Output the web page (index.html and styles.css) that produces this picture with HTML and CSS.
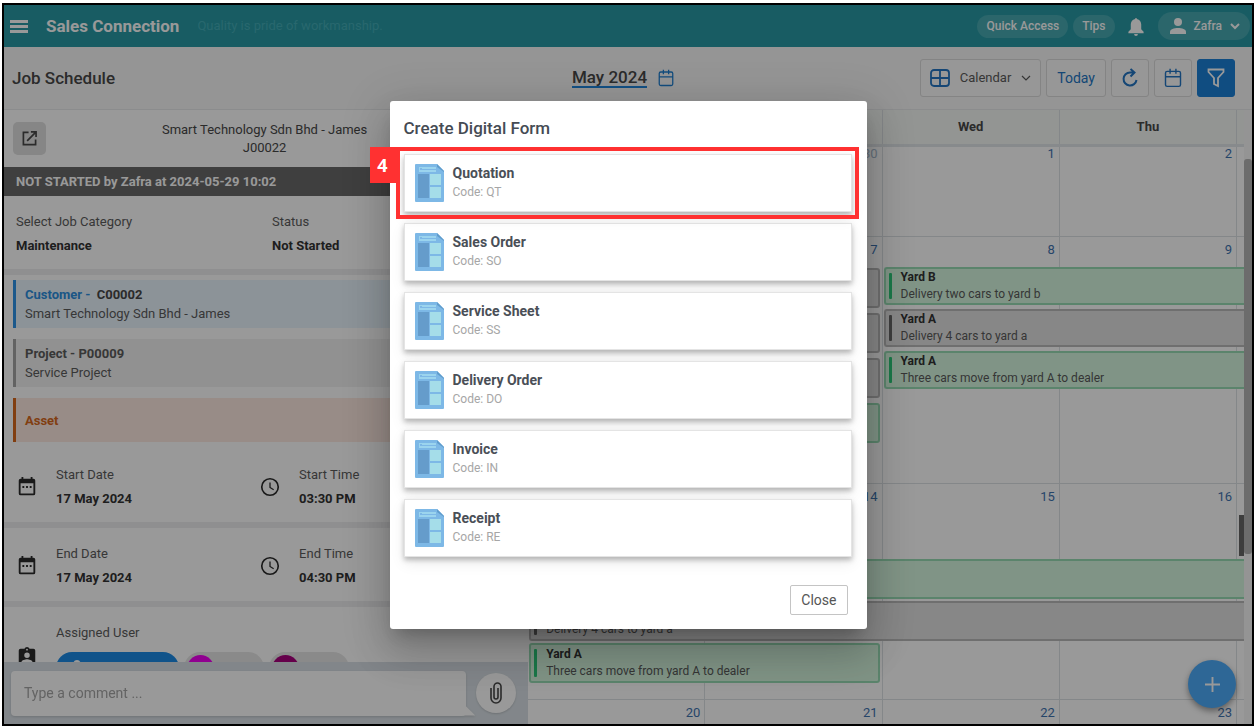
FILE: index.html
```html
<!DOCTYPE html>
<html lang="en">
<head>
<meta charset="utf-8">
<meta name="viewport" content="width=device-width, initial-scale=1">
<title>Sales Connection - Job Schedule</title>
<link rel="stylesheet" href="styles.css">
</head>
<body>
<svg class="sprite" aria-hidden="true">
  <symbol id="i-date" viewBox="0 0 24 24"><path fill="currentColor" d="M7 11h2v2H7zm4 0h2v2h-2zm4 0h2v2h-2zm4-8h-1V1h-2v2H8V1H6v2H5a2 2 0 0 0-2 2v14a2 2 0 0 0 2 2h14a2 2 0 0 0 2-2V5a2 2 0 0 0-2-2zm0 16H5V8h14z"/></symbol>
  <symbol id="i-clock" viewBox="0 0 24 24"><circle cx="12" cy="12" r="9" fill="none" stroke="currentColor" stroke-width="1.800"/><path d="M12 7v5.500l4 2.500" fill="none" stroke="currentColor" stroke-width="1.400"/></symbol>
  <symbol id="i-cal" viewBox="0 0 24 24"><path d="M5 4h14a2 2 0 0 1 2 2v14a2 2 0 0 1-2 2H5a2 2 0 0 1-2-2V6a2 2 0 0 1 2-2zM3 10.500h18M8.500 1v6M15.500 1v6" fill="none" stroke="currentColor" stroke-width="1.700"/></symbol>
  <symbol id="i-doc" viewBox="0 0 29 38"><path fill="#7db8e6" d="M1 0h21l7 7v30a1 1 0 0 1-1 1H1a1 1 0 0 1-1-1V1a1 1 0 0 1 1-1z"/><path fill="#5f9ccc" d="M22 0l7 7v1l-7-5z"/><path fill="#9bd4ee" d="M4 3h17v5H4z"/><path fill="#7db8e6" d="M6 4h1v1h14v1H5V4z"/><path fill="#659ccb" d="M3 10h11v24H3z"/><path fill="#a5dde9" d="M15 10h11v11H15zM15 23h11v11H15z"/></symbol>
</svg>

<div class="app">
  <header class="topbar">
    <button class="menu-btn" type="button" aria-label="Menu"><span></span><span></span><span></span></button>
    <strong class="brand">Sales Connection</strong>
    <span class="motto">Quality is pride of workmanship.</span>
    <button class="pill" type="button">Quick Access</button>
    <button class="pill" type="button">Tips</button>
    <button class="bell" type="button" aria-label="Notifications"><svg viewBox="0 0 16 20"><path fill="currentColor" d="M7 2a1 1 0 0 1 2 0c3 .6 4.500 3 4.500 6v5L16 15.500V17H0v-1.500L2.500 13V8C2.500 5 4 2.600 7 2zM6 18h4a2 2 0 0 1-4 0z"/></svg></button>
    <button class="pill pill--user" type="button">
      <svg class="user-icon" viewBox="0 0 16 16"><circle cx="8" cy="4" r="4" fill="currentColor"/><path fill="currentColor" d="M0 16v-2c0-3 4-4 8-4s8 1 8 4v2z"/></svg>
      Zafra
      <svg class="chev" viewBox="0 0 10 10"><path d="M1 3l4 4 4-4" fill="none" stroke="currentColor" stroke-width="2"/></svg>
    </button>
  </header>

  <div class="toolbar">
    <h1 class="page-title">Job Schedule</h1>
    <div class="month"><a href="#" class="month-link">May 2024</a><svg class="month-icon"><use href="#i-cal"/></svg></div>
    <div class="tools">
      <button class="tool tool--view" type="button">
        <svg class="grid-icon" viewBox="0 0 20 18"><rect x="1" y="1" width="18" height="16" rx="3" fill="none" stroke="currentColor" stroke-width="1.800"/><path d="M10 1v16M1 9h18" stroke="currentColor" stroke-width="1.800"/></svg>
        Calendar
        <svg class="chev" viewBox="0 0 10 10"><path d="M1 3l4 4 4-4" fill="none" stroke="currentColor" stroke-width="1.200"/></svg>
      </button>
      <button class="tool tool--today" type="button">Today</button>
      <button class="tool" type="button" aria-label="Refresh"><svg viewBox="0 0 18 20" class="tool-icon"><path d="M15.500 12a6.500 6.500 0 1 1-6.500-7.500h4M9.500 1l4 3.500-4 4" fill="none" stroke="currentColor" stroke-width="2"/></svg></button>
      <button class="tool" type="button" aria-label="Pick date"><svg class="tool-icon"><use href="#i-cal"/></svg></button>
      <button class="tool tool--filter" type="button" aria-label="Filter"><svg viewBox="0 0 18 20" class="tool-icon"><path d="M1.500 1.500h15v2.500L11 10v8l-4-2v-6L1.500 4z" fill="none" stroke="currentColor" stroke-width="1.800"/></svg></button>
    </div>
  </div>

  <main class="main">
    <section class="job">
      <div class="job-scroll">
        <div class="job-head">
          <button class="open-btn" type="button" aria-label="Open job"><svg viewBox="0 0 16 16"><path d="M7 1.500H1.500v13h13V9M9.500 1h5.500v5.500M15 1L5.500 10.500" fill="none" stroke="currentColor" stroke-width="1.800"/></svg></button>
          <p class="job-name">Smart Technology Sdn Bhd - James<br>J00022</p>
        </div>
        <p class="job-status">NOT STARTED by Zafra at 2024-05-29 10:02</p>
        <dl class="row">
          <div><dt>Select Job Category</dt><dd>Maintenance</dd></div>
          <div><dt>Status</dt><dd>Not Started</dd></div>
        </dl>
        <div class="links">
          <div class="link link--customer"><b><span class="link-kind">Customer - </span> C00002</b><span>Smart Technology Sdn Bhd - James</span></div>
          <div class="link link--project"><b>Project - P00009</b><span>Service Project</span></div>
          <div class="link link--asset"><b>Asset</b></div>
        </div>
        <dl class="row row--icons">
          <div class="cell"><svg class="cell-icon"><use href="#i-date"/></svg><div><dt>Start Date</dt><dd>17 May 2024</dd></div></div>
          <div class="cell"><svg class="cell-icon"><use href="#i-clock"/></svg><div><dt>Start Time</dt><dd>03:30 PM</dd></div></div>
        </dl>
        <dl class="row row--icons">
          <div class="cell"><svg class="cell-icon"><use href="#i-date"/></svg><div><dt>End Date</dt><dd>17 May 2024</dd></div></div>
          <div class="cell"><svg class="cell-icon"><use href="#i-clock"/></svg><div><dt>End Time</dt><dd>04:30 PM</dd></div></div>
        </dl>
        <div class="row row--users">
          <div class="cell">
            <svg class="cell-icon" viewBox="0 0 24 24"><path fill="currentColor" d="M19 3h-4.200a3 3 0 0 0-5.600 0H5a2 2 0 0 0-2 2v14a2 2 0 0 0 2 2h14a2 2 0 0 0 2-2V5a2 2 0 0 0-2-2zm-7 0a1 1 0 1 1 0 2 1 1 0 0 1 0-2zm0 4a3 3 0 1 1 0 6 3 3 0 0 1 0-6zm6 12H6v-1.400c0-2 4-3.100 6-3.100s6 1.100 6 3.100z"/></svg>
            <div>
              <div>Assigned User</div>
              <div class="chips">
                <span class="chip chip--main"><svg viewBox="0 0 16 16"><circle cx="8" cy="4" r="4" fill="currentColor"/><path fill="currentColor" d="M0 16v-2c0-3 4-4 8-4s8 1 8 4v2z"/></svg></span>
                <span class="chip"><i class="avatar avatar--pink"></i></span>
                <span class="chip"><i class="avatar avatar--wine"></i></span>
              </div>
            </div>
          </div>
        </div>
      </div>
      <form class="comment">
        <div class="bubble"><input class="comment-input" type="text" placeholder="Type a comment ..." aria-label="Comment"></div>
        <button class="clip" type="button" aria-label="Attach file"><svg viewBox="0 0 12 22"><path d="M1 6v10a5 5 0 0 0 10 0V4.500a3.500 3.500 0 0 0-7 0V15a2 2 0 0 0 4 0V6" fill="none" stroke="currentColor" stroke-width="1.600"/></svg></button>
      </form>
    </section>

    <section class="calendar">
      <div class="cols heads"><div></div><div></div><div>Wed</div><div>Thu</div><div></div></div>
      <div class="cols week week--1">
        <div class="day"></div><div class="day day--other">30</div><div class="day">1</div><div class="day">2</div><div class="day"></div>
      </div>
      <div class="cols week week--2">
        <div class="day"></div><div class="day">7</div><div class="day">8</div><div class="day">9</div><div class="day"></div>
        <div class="stack stack--tue">
          <div class="event event--tall"></div><div class="event event--tall"></div><div class="event event--tall"></div><div class="event event--tall event--green"></div>
        </div>
        <div class="stack stack--wed">
          <div class="event event--green event--open"><b>Yard B</b><span>Delivery two cars to yard b</span></div>
          <div class="event event--open"><b>Yard A</b><span>Delivery 4 cars to yard a</span></div>
          <div class="event event--green event--open"><b>Yard A</b><span>Three cars move from yard A to dealer</span></div>
        </div>
      </div>
      <div class="cols week week--3">
        <div class="day"></div><div class="day">14</div><div class="day">15</div><div class="day">16</div><div class="day"><i class="stub"></i></div>
        <div class="stack stack--full">
          <div class="event event--tall event--green event--open"></div>
          <div class="event event--tall event--open"><b>Yard A</b><span>Delivery 4 cars to yard a</span></div>
        </div>
        <div class="stack stack--half">
          <div class="event event--tall event--green"><b>Yard A</b><span>Three cars move from yard A to dealer</span></div>
        </div>
      </div>
      <div class="cols week week--4">
        <div class="day">20</div><div class="day">21</div><div class="day">22</div><div class="day">23</div><div class="day"></div>
      </div>
    </section>
    <div class="scrollbar"><div class="thumb"></div></div>
  </main>

  <button class="fab" type="button" aria-label="Add"><svg viewBox="0 0 16 16"><path d="M8 0v16M0 8h16" stroke="currentColor" stroke-width="2"/></svg></button>

  <div class="backdrop">
    <div class="modal" role="dialog" aria-labelledby="modal-title">
      <h2 class="modal-title" id="modal-title">Create Digital Form</h2>
      <div class="forms">
        <div class="form-slot">
          <button class="form-card" type="button"><svg class="doc"><use href="#i-doc"/></svg><span><b>Quotation</b><small>Code: QT</small></span></button>
          <div class="callout"><span class="callout-num">4</span></div>
        </div>
        <button class="form-card" type="button"><svg class="doc"><use href="#i-doc"/></svg><span><b>Sales Order</b><small>Code: SO</small></span></button>
        <button class="form-card" type="button"><svg class="doc"><use href="#i-doc"/></svg><span><b>Service Sheet</b><small>Code: SS</small></span></button>
        <button class="form-card" type="button"><svg class="doc"><use href="#i-doc"/></svg><span><b>Delivery Order</b><small>Code: DO</small></span></button>
        <button class="form-card" type="button"><svg class="doc"><use href="#i-doc"/></svg><span><b>Invoice</b><small>Code: IN</small></span></button>
        <button class="form-card" type="button"><svg class="doc"><use href="#i-doc"/></svg><span><b>Receipt</b><small>Code: RE</small></span></button>
      </div>
      <button class="close-btn" type="button">Close</button>
    </div>
  </div>
</div>
</body>
</html>
```
FILE: styles.css
```css
* { box-sizing: border-box; margin: 0; padding: 0; }
body {
  height: 100vh;
  padding: 3px 3px 2px 2px;
  background: #fff;
  font: 13px/18px Roboto, "Liberation Sans", sans-serif;
  color: #484848;
}
button, input { font: inherit; color: inherit; border: 0; background: none; }
button { cursor: pointer; }
svg { display: block; flex: none; }
b, strong, dd { font-weight: 700; }
.sprite { position: absolute; width: 0; height: 0; }

.app {
  position: relative;
  display: flex;
  flex-direction: column;
  height: 100%;
  border: 2px solid #000;
  background: #fff;
  overflow: hidden;
}

/* Top bar */
.topbar {
  display: flex;
  align-items: center;
  flex: none;
  height: 42px;
  padding: 0 2px 0 6px;
  background: #289aa5;
  color: #fff;
}
.menu-btn { display: flex; flex-direction: column; gap: 2px; width: 18px; }
.menu-btn span { height: 3px; background: #fff; }
.brand { margin-left: 18px; font-size: 17px; }
.motto { margin: 0 auto 0 18px; color: #44adb8; }
.pill {
  margin-right: 5px;
  padding: 0 9px;
  border-radius: 14px;
  background: #48aab3;
  font-size: 12px;
  font-weight: 500;
  line-height: 23px;
}
.bell { margin: 0 14px 0 8px; }
.bell svg { width: 16px; height: 19px; }
.pill--user {
  display: flex;
  align-items: center;
  gap: 8px;
  margin: 0;
  padding: 0 10px 0 12px;
  line-height: 28px;
}
.user-icon { width: 16px; height: 16px; }
.chev { width: 10px; height: 10px; }

/* Toolbar */
.toolbar {
  display: grid;
  grid-template-columns: 1fr auto 1fr;
  align-items: center;
  flex: none;
  height: 63px;
  padding: 0 17px 0 8px;
  background: #f8f8f8;
  border-bottom: 1px solid #e8eaec;
}
.page-title { font-size: 17px; font-weight: 500; }
.month { display: flex; gap: 10px; align-items: center; color: #1f7fd0; }
.month-link {
  color: #484848;
  font-size: 17px;
  font-weight: 500;
  line-height: 18px;
  text-decoration: none;
  border-bottom: 2px solid #1f86dc;
}
.month-icon { width: 18px; height: 18px; }
.tools { display: flex; justify-content: flex-end; gap: 5px; }
.tool {
  display: flex;
  align-items: center;
  justify-content: center;
  width: 38px;
  height: 38px;
  border: 1px solid #dcdcdc;
  border-radius: 3px;
  background: #fcfcfc;
  color: #2376c4;
}
.tool--view { width: auto; gap: 10px; padding: 0 9px; color: #5a5a5a; }
.tool--today { width: auto; padding: 0 10px; font-size: 14px; }
.tool--filter { background: #1b80d8; border-color: #1b80d8; color: #fff; }
.tool-icon { width: 20px; height: 20px; }
.grid-icon { width: 20px; height: 18px; color: #2376c4; }

/* Job panel */
.main { display: flex; flex: 1; min-height: 0; }
.job { display: flex; flex-direction: column; flex: 0 0 42%; min-width: 0; }
.job-scroll { flex: 1; min-height: 0; overflow: hidden; }
.job-head { display: flex; align-items: center; height: 57px; padding: 0 9px; }
.open-btn {
  display: grid;
  place-items: center;
  width: 33px;
  height: 33px;
  border-radius: 5px;
  background: #dfdfdf;
}
.open-btn svg { width: 15px; height: 15px; }
.job-name { flex: 1; margin-right: 36px; text-align: center; }
.job-status { padding: 0 12px; background: #696969; color: #fff; font-weight: 700; line-height: 29px; }
.row {
  display: grid;
  grid-template-columns: 1fr 1fr;
  padding: 14px 0 11px 12px;
  border-bottom: 6px solid #eeeef1;
  line-height: 24px;
}
.row dt, .row--users { color: #5c5c5c; }
.row dd { color: #333; }
.row--icons { padding-right: 26px; }
.row--users { grid-template-columns: 1fr; border: 0; }
.cell { display: flex; align-items: center; gap: 18px; }
.cell-icon { width: 22px; height: 22px; color: #2a2a2a; }
.links { display: flex; flex-direction: column; gap: 11px; padding: 5px 9px 7px; }
.link {
  display: flex;
  flex-direction: column;
  justify-content: center;
  min-height: 48px;
  padding-left: 9px;
  border-left: 3px solid;
  line-height: 19px;
}
.link span { color: #5c5c5c; }
.link--customer { border-color: #2d93e8; background: #eaf5fe; }
.link b .link-kind { margin-right: 3px; color: #2d8fe0; }
.link--project { border-color: #a3a3a3; background: #f2f2f2; }
.link--project b { color: #5c5c5c; }
.link--asset { min-height: 44px; border-color: #d8681c; background: #fde9e1; color: #d8681c; }
.chips { display: flex; gap: 5px; margin: 7px 0 8px; }
.chip { width: 80px; height: 32px; padding: 3px; border-radius: 16px; background: #e6e6e6; }
.chip--main { width: 123px; padding: 8px 14px; background: #1b8be6; color: #fff; }
.chip--main svg { width: 14px; height: 14px; }
.avatar { display: block; width: 27px; height: 27px; border-radius: 50%; }
.avatar--pink { background: #f000f0; }
.avatar--wine { background: #a8007e; }

.comment { display: flex; align-items: center; gap: 10px; flex: none; height: 62px; padding: 0 12px 0 7px; background: #d9e0e6; }
.bubble { position: relative; flex: 1; filter: drop-shadow(0 1px 1px rgba(0, 0, 0, .15)); }
.bubble::after {
  content: "";
  position: absolute;
  right: -9px;
  bottom: 0;
  width: 12px;
  height: 12px;
  background: #fff;
  clip-path: polygon(0 0, 100% 100%, 0 100%);
}
.comment-input { display: block; width: 100%; height: 45px; padding: 0 13px; border-radius: 4px; background: #fff; font-size: 14px; }
.comment-input::placeholder { color: #a6a6a6; opacity: 1; }
.clip { display: grid; place-items: center; width: 40px; height: 40px; border-radius: 50%; background: #fff; box-shadow: 0 1px 2px rgba(0, 0, 0, .15); }
.clip svg { width: 12px; height: 22px; }

/* Calendar */
.calendar { display: flex; flex-direction: column; flex: 1; min-width: 0; overflow: hidden; }
.cols { display: grid; grid-template-columns: repeat(4, minmax(0, 1fr)) 7px; flex: none; }
.heads { background: #f5f8f6; border-bottom: 3px solid #e2e6ea; text-align: center; font-weight: 700; line-height: 34px; }
.heads div, .day { border-right: 1px solid #dde1e4; }
.heads div { min-height: 34px; }
.day {
  grid-row: 1;
  min-width: 0;
  padding: 6px 4px;
  border-bottom: 1px solid #dde1e4;
  color: #3f74b0;
  line-height: 14px;
  text-align: right;
}
.day:nth-child(1) { grid-column: 1; }
.day:nth-child(2) { grid-column: 2; }
.day:nth-child(3) { grid-column: 3; }
.day:nth-child(4) { grid-column: 4; }
.day:nth-child(5) { grid-column: 5; padding-right: 0; padding-left: 0; border-right: 0; }
.heads div:last-child { border-right: 0; }
.day--other { color: #a9bccf; }
.week--1 { min-height: 90px; }
.week--1 .day { padding-top: 0; }
.week--2 { min-height: 247px; }
.week--3 { min-height: 216px; }
.week--4 { flex: 1; }
.stack { display: flex; flex-direction: column; gap: 4px; grid-row: 1; align-self: start; }
.stack--tue { grid-column: 2; gap: 5px; margin: 31px 3px 0 0; }
.stack--wed { grid-column: 3 / 6; margin: 30px 0 0 1px; }
.stack--full { grid-column: 1 / 6; gap: 2px; margin: 75px 0 0 1px; }
.stack--half { grid-column: 1 / 3; margin: 159px 3px 0 1px; }
.event {
  position: relative;
  display: flex;
  flex-direction: column;
  justify-content: center;
  min-height: 38px;
  padding-left: 15px;
  border: 2px solid #bababa;
  border-radius: 3px;
  background: #e2e2e2;
  color: #5a5a5a;
  font-size: 12px;
  line-height: 17px;
  white-space: nowrap;
}
.event b { color: #333; }
.event--tall { min-height: 40px; }
.event::before {
  content: "";
  position: absolute;
  top: 4px;
  bottom: 4px;
  left: 3px;
  width: 3px;
  border-radius: 1px;
  background: #666;
}
.event:empty::before { display: none; }
.event--green { border-color: #98dcb4; background: #d5f7e0; }
.event--green::before { background: #2cc878; }
.event--open { border-right: 0; border-radius: 3px 0 0 3px; }
.stub { display: block; width: 5px; height: 41px; margin: 25px 0 0 2px; background: #666; }
.scrollbar { flex: none; width: 8px; padding-top: 49px; background: #f7f7f7; }
.thumb { height: 70%; max-height: 395px; border-radius: 3px; background: #b4b4b4; }

.fab {
  position: absolute;
  right: 16px;
  bottom: 16px;
  display: grid;
  place-items: center;
  width: 48px;
  height: 48px;
  border-radius: 50%;
  background: #4dacfb;
  color: #fff;
  box-shadow: 0 3px 6px rgba(0, 0, 0, .4);
}
.fab svg { width: 15px; height: 15px; }

/* Dialog */
.backdrop {
  position: absolute;
  inset: 0;
  display: flex;
  align-items: center;
  justify-content: center;
  background: rgba(0, 0, 0, .4);
}
.modal {
  display: flex;
  flex-direction: column;
  width: 477px;
  max-width: 95%;
  padding: 15px 15px 14px 14px;
  border-radius: 3px;
  background: #fff;
  box-shadow: 0 11px 15px -7px rgba(0, 0, 0, .2), 0 24px 38px 3px rgba(0, 0, 0, .14), 0 9px 46px 8px rgba(0, 0, 0, .12);
}
.modal-title { margin-bottom: 14px; font-size: 17px; font-weight: 500; line-height: 24px; color: #454b54; }
.forms { display: flex; flex-direction: column; gap: 11px; }
.form-slot { position: relative; }
.form-card {
  display: flex;
  align-items: center;
  gap: 9px;
  width: 100%;
  min-height: 58px;
  padding: 0 10px;
  border: 1px solid #e4e4e4;
  background: #fff;
  box-shadow: 0 3px 5px rgba(0, 0, 0, .25), 0 6px 14px rgba(0, 0, 0, .08);
  text-align: left;
}
.form-card b, .form-card small { display: block; line-height: 19px; }
.form-card b { font-size: 14px; color: #4a4f57; }
.form-card small { font-size: 12px; color: #a6a6a6; }
.doc { width: 29px; height: 38px; }
.callout { position: absolute; inset: -7px -7px -7px -8px; border: 4px solid #ff3131; pointer-events: none; }
.callout-num {
  position: absolute;
  top: -4px;
  right: 100%;
  width: 26px;
  margin-right: 4px;
  background: #ff3131;
  color: #fff;
  font: 700 18px/36px "Open Sans", sans-serif;
  text-align: center;
}
.close-btn {
  align-self: flex-end;
  margin: 28px 4px 0 0;
  padding: 0 10px;
  border: 1px solid #c4c4c4;
  border-radius: 2px;
  font-size: 14px;
  line-height: 28px;
  color: #555;
}
```
